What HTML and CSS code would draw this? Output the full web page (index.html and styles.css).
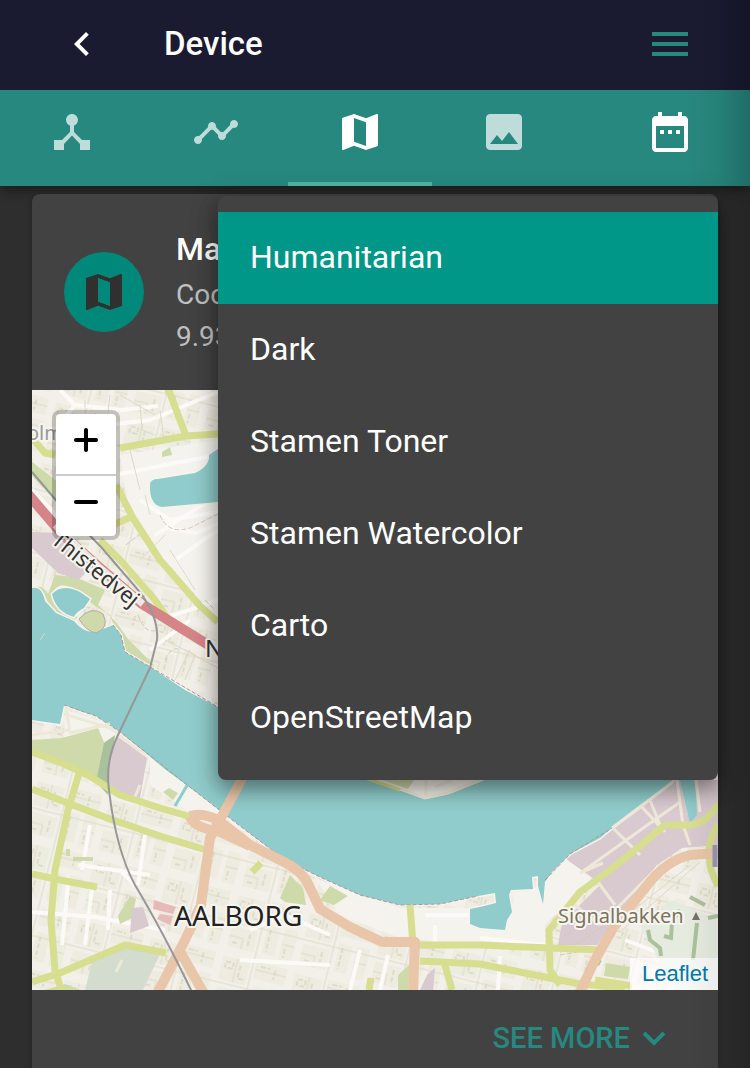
FILE: index.html
```html
<!DOCTYPE html>
<html lang="en">
<head>
<meta charset="utf-8">
<meta name="viewport" content="width=device-width, initial-scale=1">
<title>Device</title>
<link rel="stylesheet" href="styles.css">
</head>
<body>
<div class="page">
  <header class="appbar">
    <div class="toolbar">
      <button class="icon-button back" aria-label="Back">
        <svg class="icon" viewBox="0 0 24 24"><path d="M16.400 7.400 15 6l-6 6 6 6 1.400-1.400L11.800 12z"/></svg>
      </button>
      <h1 class="title">Device</h1>
      <button class="icon-button menu-toggle" aria-label="Menu">
        <svg class="icon" viewBox="0 0 24 24"><path d="M3 18h18v-2H3v2zm0-5h18v-2H3v2zm0-7v2h18V6H3z"/></svg>
      </button>
    </div>
    <nav class="tabbar">
      <div class="tabs">
        <button class="tab" aria-label="Topology">
          <svg class="icon" viewBox="0 0 24 24"><path d="m17 16-4-4V8.820C14.160 8.400 15 7.300 15 6c0-1.660-1.340-3-3-3S9 4.340 9 6c0 1.300.840 2.400 2 2.820V12l-4 4H3v5h5v-3.050l4-4.200 4 4.200V21h5v-5h-4z"/></svg>
        </button>
        <button class="tab" aria-label="Timeline">
          <svg class="icon" viewBox="0 0 24 24"><path d="M23 8c0 1.100-.900 2-2 2-.180 0-.350-.020-.510-.070l-3.560 3.550c.050.160.070.340.070.520 0 1.100-.900 2-2 2s-2-.900-2-2c0-.180.020-.360.070-.520l-2.550-2.550c-.160.050-.340.070-.520.070s-.360-.020-.520-.070l-4.550 4.560c.050.160.070.330.070.510 0 1.100-.900 2-2 2s-2-.900-2-2 .900-2 2-2c.180 0 .350.020.510.070l4.560-4.550C8.020 9.360 8 9.180 8 9c0-1.100.900-2 2-2s2 .900 2 2c0 .180-.020.360-.070.520l2.550 2.550c.160-.050.340-.070.520-.070s.360.020.520.070l3.550-3.560C19.020 8.350 19 8.180 19 8c0-1.100.900-2 2-2s2 .900 2 2z"/></svg>
        </button>
        <button class="tab selected" aria-label="Map" aria-current="page">
          <svg class="icon" viewBox="0 0 24 24"><path d="m20.500 3-.160.030L15 5.100 9 3 3.360 4.900c-.210.070-.360.250-.360.480V20.500c0 .280.220.500.500.500l.160-.030L9 18.900l6 2.100 5.640-1.900c.210-.070.360-.250.360-.480V3.500c0-.280-.220-.500-.500-.500zM15 19l-6-2.110V5l6 2.110V19z"/></svg>
        </button>
        <button class="tab" aria-label="Images">
          <svg class="icon" viewBox="0 0 24 24"><path d="M21 19V5c0-1.100-.900-2-2-2H5c-1.100 0-2 .900-2 2v14c0 1.100.900 2 2 2h14c1.100 0 2-.900 2-2zM8.500 13.500l2.500 3.010L14.500 12l4.500 6H5l3.500-4.500z"/></svg>
        </button>
      </div>
      <button class="icon-button calendar" aria-label="Date range">
        <svg class="icon" viewBox="0 0 24 24"><path d="M9 11H7v2h2v-2zm4 0h-2v2h2v-2zm4 0h-2v2h2v-2zm2-7h-1V2h-2v2H8V2H6v2H5c-1.110 0-1.990.900-1.990 2L3 20c0 1.100.890 2 2 2h14c1.100 0 2-.900 2-2V6c0-1.100-.900-2-2-2zm0 16H5V9h14v11z"/></svg>
      </button>
    </nav>
  </header>

  <main class="content">
    <section class="card">
      <div class="card-header">
        <div class="avatar">
          <svg class="icon" viewBox="0 0 24 24"><path d="m20.500 3-.160.030L15 5.100 9 3 3.360 4.900c-.210.070-.360.250-.360.480V20.500c0 .280.220.500.500.500l.160-.030L9 18.900l6 2.100 5.640-1.900c.210-.070.360-.250.360-.480V3.500c0-.280-.220-.500-.500-.500zM15 19l-6-2.110V5l6 2.110V19z"/></svg>
        </div>
        <div>
          <h2 class="card-title">Map</h2>
          <p class="card-sub">Coo</p>
          <p class="card-sub">9.93</p>
        </div>
      </div>

      <div class="map">
        <svg class="map-art" viewBox="32 390 686 600" preserveAspectRatio="xMidYMid slice" role="img" aria-label="Street map of Aalborg">
          <defs>
            <pattern id="blocks" width="74" height="62" patternUnits="userSpaceOnUse" patternTransform="rotate(14)">
              <path class="block" d="M4 5h28v24H4zM38 3h32v17H38zM40 27h13v29H40zM58 26h13v32H58zM5 36h27v21H5z"/>
              <path class="lane" d="M0 32h74M35 0v62M19 5v24M38 11h32M5 46h14v11M58 42h13"/>
              <path class="lane dash" d="M8 10h8v6h-8zM23 11v13h6M44 31v22M62 46v9M9 52h6M25 40v12M43 7h9M58 7v10"/>
            </pattern>
          </defs>
          <rect class="land" x="32" y="390" width="686" height="600"/>
          <rect fill="url(#blocks)" x="32" y="390" width="686" height="600"/>

          <!-- open ground without buildings -->
          <path class="open" d="M120 455 218 440V625L200 600 130 520zM270 850 320 880 400 908H470L545 925V945H480L400 938 340 915 310 870zM66 710 110 724 145 752 218 802 218 815 190 812 150 785V750L118 734 104 742 64 738zM560 860 600 842 590 880 560 910 545 925 508 925 515 893 545 885z"/>

          <!-- white minor roads -->
          <g class="minor">
            <path d="M60 390 75 405 122 410 158 406M75 405 62 420M116 424 150 420 218 392M120 474 180 462 218 455M140 500 170 520 218 512M155 535 218 495M175 560 218 530M165 515 172 529 196 533 218 524M32 490 70 530M160 620 218 600M150 650 190 620M32 912 95 917 165 930M68 885 62 945M92 888 85 945M110 890 108 930M78 865 150 875M120 870 135 885M90 825 82 870M145 835 138 885M250 930 285 915 330 935M240 960 330 965M360 950 350 990M388 955 380 990M425 915 470 915M435 925 435 942M480 938 545 945M500 956 498 990M625 940 718 975"/>
          </g>

          <!-- parks and built-up areas -->
          <g class="green">
            <path d="M32 462 55 480 90 505 82 518 55 500 32 476z"/>
            <path d="M32 588Q42 583 48 594L55 575 75 577 105 590 98 605 116 622 128 639 155 666 140 661 124 652 110 615 95 606 84 597Q60 575 52 594 58 612 78 617L72 622 52 610 43 592z"/>
            <path d="M32 740 62 738 98 728 106 747 99 779 75 770 50 757 32 751z"/>
            <path d="M118 916 130 896 136 899 132 918 120 924zM162 452l8-5 2 8-10 2zM163 792l6-4 9 5-5 7zM280 898 290 875 303 888 306 905 285 902zM320 900 330 886 348 896 334 905zM398 975 410 964 408 990h-10zM606 963 630 967 628 979 604 976zM66 849l4 0v7h-4zM73 857h20v4H73z"/>
            <path d="M65 984 80 990H45z"/>
          </g>
          <path class="darkgreen" d="M104 743 115 735 112 757 108 795 96 782z"/>
          <path class="sage" d="M85 990 93 958 125 947 160 954 143 990z"/>
          <path class="sage pale" d="M640 925 672 900 718 920V990H675z"/>
          <g class="purple">
            <path d="M118 737 147 758 140 798 110 790 108 762zM32 532 60 533 92 567 78 580 58 573 32 548z"/>
            <path d="M674 780h44v65l-36 3-25 17-60 80h-39l4-22 39-39-35-25 46-37z"/>
            <path d="M427 975 435 968 433 990H420zM132 908 143 907 149 926 130 933z"/>
          </g>
          <path class="rose" d="M154 900l22 7-3 7-20-5zM160 914l13 2-3 9-13-6z"/>

          <!-- water -->
          <g class="water">
            <path d="M32 588Q42 586 45 601L56 613 74 621Q88 638 103 629L113 625 121 635 125 652 152 668 185 690 218 707 370 780 425 799 452 793 485 780 673 780 640 807 612 828 600 838 570 854 552 872 545 882 543 904 538 886V876L532 877 533 889 511 890 509 895 512 912 507 920 505 930 480 928 470 924V909L480 907 496 903 495 893 478 896 440 904 400 905 360 895 320 877 285 860 240 826 200 795 166 770 148 755 120 732 96 716 80 711 64 705 60 724 32 720z"/>
            <path d="M52 594Q62 583 80 592L90 599 84 608Q76 612 74 617 56 612 52 594z"/>
            <path d="M158 479 195 473Q210 466 209 455L218 449V502L162 507Q149 505 150 484 151 479 158 479z"/>
            <path class="water-plain" d="M680 780h15l2 35-7 8z"/>
          </g>
          <path class="green island" d="M79 619Q91 605 103 614 110 628 96 633 86 631 79 619z"/>
          <path class="canal" d="M189 782 175 806"/>
          <path class="land" d="M375 780 425 799 450 793 482 780z"/>
          <path class="green" d="M382 780 408 789 414 780z"/>
          <path class="street" d="M370 778 425 798 448 793 482 779M426 780v16M435 787 452 780"/>
          <path class="shore" d="M113 625 121 635 125 652 152 668 218 707M64 705 96 716 120 732 200 795 240 826 285 860 320 877 360 895 400 905 440 904 478 896M545 880 570 854 612 828"/>

          <!-- cream streets -->
          <path class="street" d="M64 714 110 728 145 755M66 706 70 733 110 724M32 735 68 730M614 829 640 855M603 863 580 873M582 872 625 841 680 802M612 828 673 782M650 800 660 825M640 805 665 832M677 780 683 825 690 845M696 780 700 812M655 870 600 925M598 882 615 905M575 905 600 925M140 785 134 799M122 960 116 972"/>
          <path class="lane" d="M615 925 690 865M620 932 700 862M120 395 155 415M85 400 85 435M110 395 108 412M140 405 142 430 155 435M160 410 164 440M130 450 140 490M145 495 150 515M170 550 195 590M140 560 165 535M185 650 218 668M165 640 195 655 185 680M175 680 190 650M40 640 45 633"/>
          <path class="lane dash" d="M160 515Q168 535 190 528L218 514M126 545 145 530M205 600l10 10M138 615Q145 635 158 630M165 660Q172 645 180 650M575 945 620 915M560 955 600 948"/>
          <path class="hedge" d="M648 930 650 940 660 948 661 956M664 936 671 938 672 922 680 910M690 897 705 905M708 918 718 916M697 923 693 960M597 965 600 960"/>

          <!-- main roads -->
          <g class="yellow">
            <path d="M168 388 186 436M120 448 186 436 218 434M32 438 45 453 55 455M116 485 133 518 160 560 200 606 218 622M100 540 122 562 155 600 170 622M115 524 133 516"/>
            <path d="M32 752 62 763 88 775 120 795 160 808 195 818M32 789 70 804 110 819 160 836 206 850M80 770 68 810 55 870 51 920 55 970 62 992M32 874 60 880 97 887M32 982 60 973 125 945 166 953M165 390h8"/>
            <path d="M410 905 413 945 480 945 600 950M420 961 480 964 545 977 580 984 625 988M444 962 452 990M371 978 369 990M252 872l9-9M595 980 632 986"/>
            <path d="M718 804Q706 824 690 825L665 825 640 846 610 870 580 892 560 917 549 930 550 970 560 985M718 824Q700 853 718 886"/>
          </g>
          <path class="yellow thin" d="M365 778 400 790"/>
          <g class="orange">
            <path d="M244 775 222 816 210 838 201 905 185 940 158 992M178 948 203 992"/>
            <path d="M190 816Q202 812 218 820L250 845 286 863Q304 872 311 890L320 909 350 927 382 942H415L413 992M190 817Q195 828 218 831L250 846"/>
            <path d="M718 853 690 855Q665 861 645 888L613 928 594 962 580 992"/>
          </g>
          <path class="motorway" d="M715 845V867"/>
          <path class="red" d="M28 494 62 534 100 568 142 604 210 646"/>
          <path class="red-outline" d="M55 525 100 568 143 604"/>

          <!-- railway -->
          <path class="rail" d="M32 472 60 505 102 548 138 590Q159 616 157 640L150 668 118 735Q105 762 109 790 116 850 135 885 162 930 192 992"/>

          <text class="label faint" x="27" y="440">olm</text>
          <text class="label road-label" transform="translate(50 542) rotate(39)">Thistedvej</text>
          <text class="label town" x="205" y="657">N</text>
          <text class="label city" x="174" y="926">AALBORG</text>
          <text class="label place" x="558" y="923">Signalbakken</text>
          <path class="peak" d="m696 912 4 8h-8z"/>
        </svg>
        <div class="zoom-control">
          <button aria-label="Zoom in"><svg class="zoom-icon" viewBox="0 0 24 24"><path d="M12 2v20M2 12h20"/></svg></button>
          <button aria-label="Zoom out"><svg class="zoom-icon" viewBox="0 0 24 24"><path d="M2 12h20"/></svg></button>
        </div>
        <div class="attribution"><a href="#">Leaflet</a></div>
      </div>

      <div class="card-actions">
        <button class="see-more">SEE MORE
          <svg class="chevron" viewBox="0 0 24 24"><path d="m2 7 10 10L22 7"/></svg>
        </button>
      </div>

      <div class="menu" role="menu">
        <button class="menu-item active" role="menuitem">Humanitarian</button>
        <button class="menu-item" role="menuitem">Dark</button>
        <button class="menu-item" role="menuitem">Stamen Toner</button>
        <button class="menu-item" role="menuitem">Stamen Watercolor</button>
        <button class="menu-item" role="menuitem">Carto</button>
        <button class="menu-item" role="menuitem">OpenStreetMap</button>
      </div>
    </section>
  </main>
</div>
</body>
</html>
```

FILE: styles.css
```css
* { box-sizing: border-box; }
body {
  margin: 0;
  background: #2e2e2e;
  color: #fff;
  font-family: Roboto, sans-serif;
}
h1, h2, p { margin: 0; }
button {
  border: 0;
  padding: 0;
  margin: 0;
  background: none;
  color: inherit;
  font: inherit;
  cursor: pointer;
}
svg { display: block; fill: currentColor; }

.page { position: relative; min-height: 100vh; }
/* soft shade along the right edge */
.page::after {
  content: "";
  position: absolute;
  inset: 0 0 0 auto;
  z-index: 1;
  width: 64px;
  background: linear-gradient(to right, transparent, rgba(0, 0, 0, .05) 50%, rgba(0, 0, 0, .2));
  pointer-events: none;
}

.appbar {
  position: relative;
  box-shadow: 0 4px 12px rgba(0, 0, 0, .45);
}
.toolbar {
  display: flex;
  align-items: center;
  height: 90px;
  padding: 0 56px 2px;
  background: #1a1a31;
}
.icon { width: 48px; height: 48px; }
.icon-button {
  display: flex;
  align-items: center;
  justify-content: center;
  width: 48px;
  height: 48px;
}
.title {
  flex: 1;
  padding-left: 60px;
  font-size: 33px;
  font-weight: 500;
  line-height: 48px;
}
.menu-toggle { color: #27887f; }

.tabbar {
  display: flex;
  justify-content: space-between;
  height: 96px;
  padding-right: 56px;
  background: #27887f;
}
.tabs { display: flex; }
.tab {
  display: flex;
  justify-content: center;
  width: 144px;
  padding-top: 18px;
  border-bottom: 4px solid transparent;
  color: #bedcd9;
}
.tab.selected { color: #fff; border-color: #4db6a6; }
.calendar { margin-top: 18px; }

.content { padding: 8px 32px 0; }
.card {
  position: relative;
  background: #424242;
  border-radius: 8px 8px 0 0;
  box-shadow: 0 2px 6px rgba(0, 0, 0, .3);
}
.card-header {
  display: flex;
  align-items: center;
  gap: 32px;
  padding: 32px;
}
.avatar {
  display: flex;
  align-items: center;
  justify-content: center;
  width: 80px;
  height: 80px;
  border-radius: 50%;
  background: #00897b;
  color: #303030;
}
.card-title { font-size: 32px; font-weight: 500; line-height: 46px; padding-bottom: 2px; }
.card-sub { font-size: 28px; line-height: 42px; color: #c0c0c0; }

.map { position: relative; height: 600px; overflow: hidden; }
.map-art { width: 100%; height: 100%; fill: none; }
.land { fill: #f3f0e9; }
.open { fill: #f5f3ee; }
.block { fill: #eeebe0; }
.lane { fill: none; stroke: #ded9c9; stroke-width: 1; }
.dash { stroke-dasharray: 5 2; stroke: #d2cbb4; }
.minor { stroke: #fbfaf6; stroke-width: 4; }
.green { fill: #cedaaa; }
.darkgreen { fill: #a9c29b; }
.sage { fill: #d3dccf; }
.pale { fill: #e5ebdf; }
.purple { fill: #d8cacf; }
.rose { fill: #e5bab9; }
.water { fill: #90cccb; stroke: #f7f3ed; stroke-width: 3; paint-order: stroke; }
.water-plain { stroke: none; }
.island { stroke: #bba9a4; stroke-width: 1; }
.canal { stroke: #90cccb; stroke-width: 3; }
.shore { stroke: #a9989e; stroke-width: 1; stroke-dasharray: 4 2; }
.street { stroke: #eee8d8; stroke-width: 3; }
.hedge { stroke: #abc19b; stroke-width: 4; }
.yellow { stroke: #d7de8f; stroke-width: 7; stroke-linejoin: round; }
.thin { stroke-width: 3; }
.orange { stroke: #e9c6a9; stroke-width: 10; stroke-linejoin: round; }
.motorway { stroke: #9d94b5; stroke-width: 5; }
.red { stroke: #d58488; stroke-width: 10; }
.red-outline { stroke: #f0e4de; stroke-width: 7; }
.rail { stroke: #979797; stroke-width: 2; }
.label {
  fill: #333;
  stroke: #f7f5ef;
  stroke-width: 4px;
  stroke-linejoin: round;
  paint-order: stroke;
  font-family: "Noto Sans", sans-serif;
}
.faint { font-size: 20px; fill: #999; }
.road-label { font-size: 22px; }
.town { font-size: 24px; }
.city { font-size: 28px; fill: #222; }
.place { font-size: 20px; fill: #7b735e; }
.peak { fill: #766f6c; }

.zoom-control {
  position: absolute;
  top: 20px;
  left: 20px;
  border: 4px solid rgba(0, 0, 0, .2);
  border-radius: 8px;
  background-clip: padding-box;
  background-color: #fff;
}
.zoom-control button {
  display: flex;
  align-items: center;
  justify-content: center;
  width: 60px;
  height: 60px;
  padding-bottom: 8px;
}
.zoom-control button:first-child { height: 62px; border-bottom: 2px solid #ccc; }
.zoom-icon {
  width: 24px;
  height: 24px;
  fill: none;
  stroke: #000;
  stroke-width: 4;
  stroke-linecap: round;
}
.attribution {
  position: absolute;
  right: 0;
  bottom: 0;
  padding: 0 10px 0 12px;
  background: rgba(255, 255, 255, .7);
  font: 22px/32px "Liberation Sans", Arial, sans-serif;
}
.attribution a { color: #0078a8; text-decoration: none; }

.card-actions {
  display: flex;
  justify-content: flex-end;
  padding: 24px 52px 6px;
}
.see-more {
  display: flex;
  align-items: center;
  gap: 12px;
  color: #27887f;
  font-size: 29px;
  font-weight: 500;
  line-height: 48px;
}
.chevron {
  width: 24px;
  height: 24px;
  fill: none;
  stroke: currentColor;
  stroke-width: 4;
}

.menu {
  position: absolute;
  top: 2px;
  right: 0;
  z-index: 2;
  width: 500px;
  padding: 16px 0;
  background: #424242;
  border-radius: 8px;
  box-shadow: 0 10px 20px rgba(0, 0, 0, .3), 0 4px 28px rgba(0, 0, 0, .25);
}
.menu-item {
  display: block;
  width: 100%;
  padding: 22px 32px 24px;
  font-size: 32px;
  line-height: 46px;
  text-align: left;
}
.menu-item.active { background: #009688; }
```
